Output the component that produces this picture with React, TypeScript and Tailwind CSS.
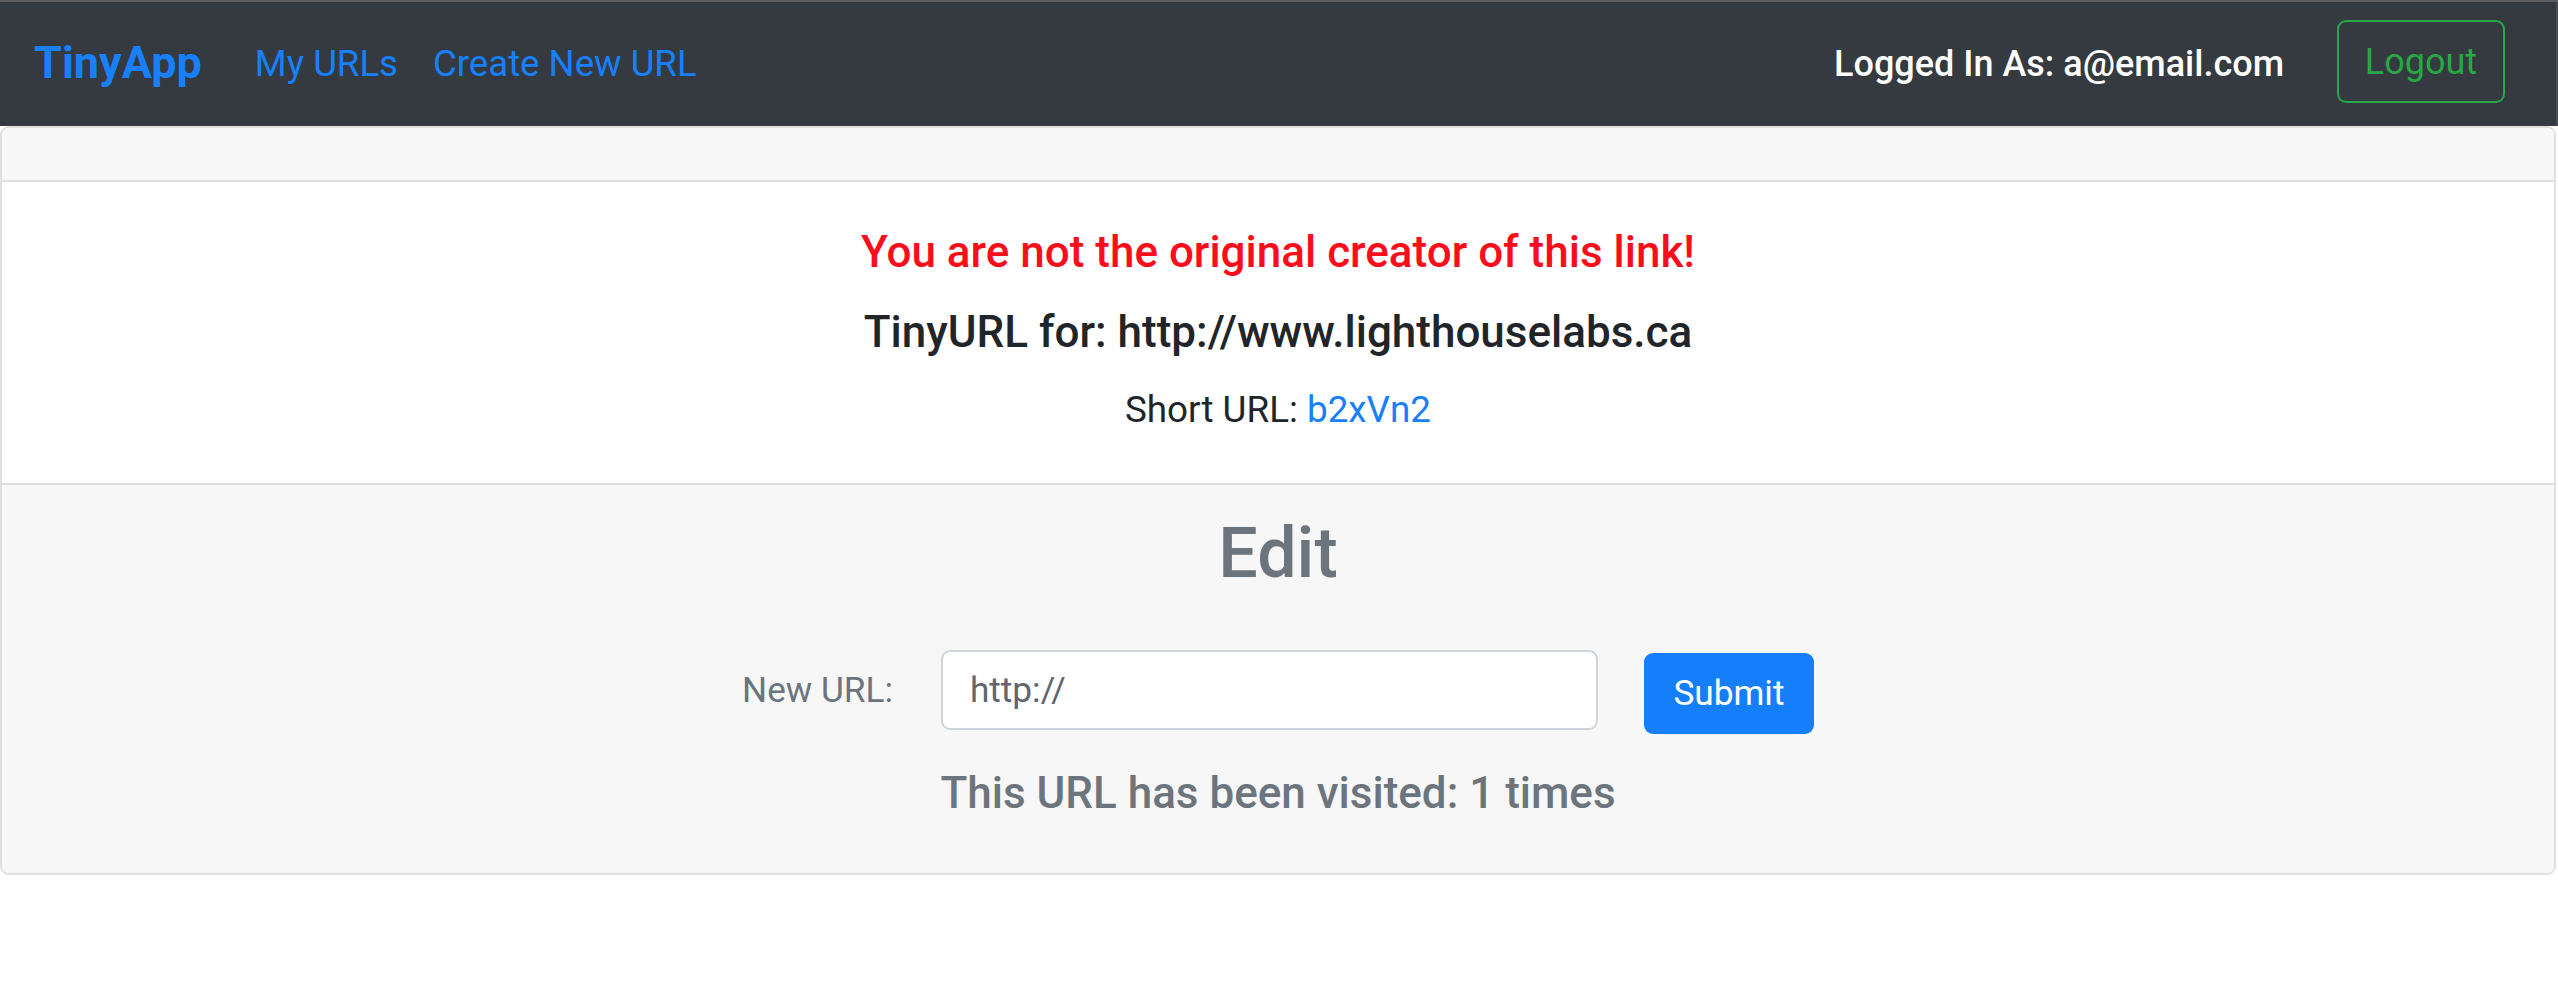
import React from "react";

export default function App() {
  return (
    <div className="min-h-screen bg-white font-['Roboto',_'Liberation_Sans',_sans-serif] border-t-2 border-[#5c5d60]">
      <nav className="h-[124px] bg-[#343a40] flex items-center pl-[34px] pr-[51px] border-r-2 border-[#4a4d52]">
        <a className="text-[45px] font-bold text-[#1780fa] leading-none mr-[53px] -mt-[3px]">TinyApp</a>
        <a className="text-[36.6px] text-[#1780fa] leading-none mr-[35px]">My URLs</a>
        <a className="text-[36.6px] text-[#1780fa] leading-none">Create New URL</a>
        <div className="flex-1" />
        <span className="text-[36px] font-medium text-white leading-none mr-[53px]">
          Logged In As: a@email.com
        </span>
        <button className="w-[168px] h-[83px] -mt-[5px] border-2 border-[#28a745] rounded-[9px] text-[#28a745] text-[36px] leading-none flex items-center justify-center">
          Logout
        </button>
      </nav>

      <div className="mr-[2px] border-2 border-[#dfdfdf] rounded-[9px] overflow-hidden">
        <div className="h-[54px] bg-[#f7f7f7] border-b-2 border-[#dfdfdf]" />

        <div className="bg-white text-center pt-[44px] pb-[47px]">
          <h5 className="text-[44px] font-medium leading-[53px] text-[#fc0d1b]">
            You are not the original creator of this link!
          </h5>
          <h5 className="mt-[27px] text-[44px] font-medium leading-[53px] text-[#212529]">
            TinyURL for: http://www.lighthouselabs.ca
          </h5>
          <p className="mt-[24px] text-[36.8px] leading-[53px] text-[#212529]">
            Short URL: <a className="text-[#1780fa]">b2xVn2</a>
          </p>
        </div>

        <div className="bg-[#f7f7f7] border-t-2 border-[#dfdfdf] text-center pt-[26px] pb-[53px]">
          <h2 className="text-[70px] font-medium leading-[84px] text-[#6c757d]">Edit</h2>
          <form className="mt-[55px] flex justify-center items-start">
            <label className="text-[35.2px] leading-[80px] text-[#6c757d] mr-[48px]">New URL:</label>
            <input
              type="text"
              defaultValue="http://"
              className="w-[657px] h-[80px] bg-white border-2 border-[#ced4da] rounded-[9px] pl-[27px] text-[35.2px] text-[#5f666d] outline-none font-['Roboto',_sans-serif]"
            />
            <button
              type="button"
              className="ml-[46px] mt-[3px] w-[170px] h-[81px] bg-[#157ffb] rounded-[9px] text-white text-[35.2px] leading-none flex items-center justify-center"
            >
              Submit
            </button>
          </form>
          <h5 className="mt-[33px] text-[44px] font-medium leading-[53px] text-[#6c757d]">
            This URL has been visited: 1 times
          </h5>
        </div>
      </div>
    </div>
  );
}
